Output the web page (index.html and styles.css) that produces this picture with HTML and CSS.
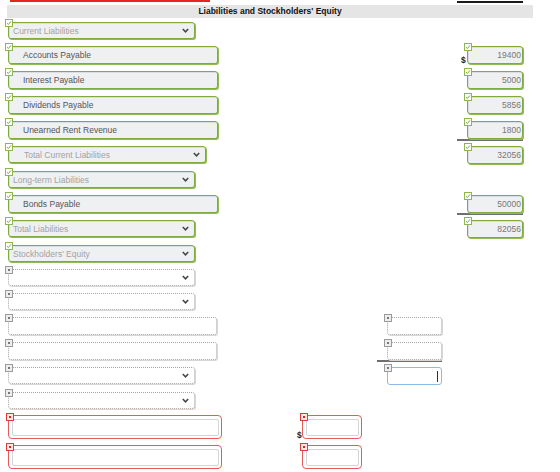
FILE: index.html
```html
<!doctype html>
<html>
<head>
  <meta charset="utf-8">
  <title>Balance Sheet</title>
  <link rel="stylesheet" href="styles.css">
</head>
<body>
  <div class="sheet">
    <div class="cutoff"><span class="cut-red"></span><span class="cut-black"></span></div>
    <div class="heading">Liabilities and Stockholders' Equity</div>

    <div class="rows">
      <div class="row">
        <div class="field ok select"><i class="badge"></i><span class="ph">Current Liabilities</span><i class="chev"></i></div>
      </div>
      <div class="row">
        <div class="field ok text"><i class="badge"></i>Accounts Payable</div>
        <div class="amt col-right"><span class="cur">$</span><div class="field ok num"><i class="badge"></i>19400</div></div>
      </div>
      <div class="row">
        <div class="field ok text"><i class="badge"></i>Interest Payable</div>
        <div class="amt col-right"><span class="cur"></span><div class="field ok num"><i class="badge"></i>5000</div></div>
      </div>
      <div class="row">
        <div class="field ok text"><i class="badge"></i>Dividends Payable</div>
        <div class="amt col-right"><span class="cur"></span><div class="field ok num"><i class="badge"></i>5856</div></div>
      </div>
      <div class="row">
        <div class="field ok text"><i class="badge"></i>Unearned Rent Revenue</div>
        <div class="amt col-right ruled"><span class="cur"></span><div class="field ok num"><i class="badge"></i>1800</div></div>
      </div>
      <div class="row">
        <div class="field ok select wide"><i class="badge"></i><span class="ph">Total Current Liabilities</span><i class="chev"></i></div>
        <div class="amt col-right"><span class="cur"></span><div class="field ok num"><i class="badge"></i>32056</div></div>
      </div>
      <div class="row">
        <div class="field ok select"><i class="badge"></i><span class="ph">Long-term Liabilities</span><i class="chev"></i></div>
      </div>
      <div class="row">
        <div class="field ok text"><i class="badge"></i>Bonds Payable</div>
        <div class="amt col-right ruled"><span class="cur"></span><div class="field ok num"><i class="badge"></i>50000</div></div>
      </div>
      <div class="row">
        <div class="field ok select"><i class="badge"></i><span class="ph">Total Liabilities</span><i class="chev"></i></div>
        <div class="amt col-right"><span class="cur"></span><div class="field ok num"><i class="badge"></i>82056</div></div>
      </div>
      <div class="row">
        <div class="field ok select"><i class="badge"></i><span class="ph">Stockholders' Equity</span><i class="chev"></i></div>
      </div>

      <div class="row">
        <div class="field blank select"><i class="badge"></i><i class="chev"></i></div>
      </div>
      <div class="row">
        <div class="field blank select"><i class="badge"></i><i class="chev"></i></div>
      </div>
      <div class="row">
        <div class="field blank text"><i class="badge"></i></div>
        <div class="amt col-mid"><span class="cur"></span><div class="field blank num"><i class="badge"></i></div></div>
      </div>
      <div class="row">
        <div class="field blank text"><i class="badge"></i></div>
        <div class="amt col-mid ruled"><span class="cur"></span><div class="field blank num"><i class="badge"></i></div></div>
      </div>
      <div class="row">
        <div class="field blank select"><i class="badge"></i><i class="chev"></i></div>
        <div class="amt col-mid"><span class="cur"></span><div class="field blank num focus"><i class="badge"></i><i class="caret"></i></div></div>
      </div>
      <div class="row">
        <div class="field blank select"><i class="badge"></i><i class="chev"></i></div>
      </div>
    </div>

    <div class="rows lower">
      <div class="row">
        <div class="field bad text"><i class="badge"></i><span class="well"></span></div>
        <div class="amt"><span class="cur">$</span><div class="field bad num"><i class="badge"></i><span class="well"></span></div></div>
      </div>
      <div class="row">
        <div class="field bad text"><i class="badge"></i><span class="well"></span></div>
        <div class="amt ruled"><span class="cur"></span><div class="field bad num"><i class="badge"></i><span class="well"></span></div></div>
      </div>
    </div>
  </div>
</body>
</html>
```

FILE: styles.css
```css
body {
  margin: 0;
  background: #fff;
  font-family: "Liberation Sans", Arial, sans-serif;
  font-size: 8.5px;
  color: #555;
}
.sheet {
  width: 526px;
  margin-left: 7px;
}

/* bottom edge of the section above */
.cutoff {
  display: flex;
  height: 5px;
}
.cut-red {
  margin-left: 3px;
  width: 200px;
  height: 2px;
  background: #e4261f;
}
.cut-black {
  margin-left: 247px;
  margin-top: 1px;
  width: 66px;
  height: 2px;
  background: #1a1a1a;
}

.heading {
  height: 13px;
  line-height: 13px;
  background: #e5e5e5;
  text-align: center;
  font-weight: bold;
  color: #111;
}

.rows {
  display: flex;
  flex-direction: column;
  gap: 7px;
  padding-top: 4px;
}
.row {
  display: grid;
  grid-template-columns: 370px 80px 76px;
  align-items: start;
}
.col-mid { grid-column: 2; }
.col-right { grid-column: 3; }

.lower {
  margin-top: 6px;
  gap: 6px;
  padding-top: 0;
}
.lower .row {
  grid-template-columns: 290px 80px;
}

/* inputs */
.field {
  position: relative;
  box-sizing: border-box;
  display: flex;
  align-items: center;
  margin-left: 1px;
  border-radius: 3px;
  white-space: nowrap;
}
.select {
  width: 187px;
  height: 17px;
  padding-left: 4px;
}
.select.wide {
  width: 198px;
  padding-left: 15px;
}
.text {
  width: 210px;
  height: 18px;
  padding-left: 14px;
}
.num {
  width: 56px;
  height: 18px;
  justify-content: flex-end;
  padding-right: 1px;
  margin-left: 0;
  color: #777;
}
.ph { color: #a2a2a2; }

.chev {
  margin-left: auto;
  margin-right: 5px;
  width: 7px;
  height: 5px;
  background: url("data:image/svg+xml,%3Csvg xmlns='http://www.w3.org/2000/svg' width='7' height='5'%3E%3Cpolyline points='0.8,1 3.5,3.8 6.2,1' fill='none' stroke='%23444' stroke-width='1.5'/%3E%3C/svg%3E") no-repeat;
}

.ok {
  background: #eff0f2;
  border: 1px solid #7dab3d;
  box-shadow: 1px 1px 0 #8fbb52, inset 1px 1px 0 #dcdde0;
}
.blank {
  background: #fff;
  border: 1px dotted #a5a5a5;
  box-shadow: 1px 1px 0 #d6d6d6;
}
.blank.text { width: 209px; }
.blank.num { width: 55px; }
.blank.focus {
  border: 1px solid #8bbbe9;
  box-shadow: none;
}
.caret {
  width: 1px;
  height: 11px;
  margin-right: 2px;
  background: #333;
}

.bad {
  height: 24px;
  padding: 3px 2px 2px 3px;
  border: 1px solid #e65a5a;
  border-radius: 4px;
  background: #fff;
}
.bad.text { width: 214px; }
.bad.num { width: 60px; }
.well {
  flex: 1;
  align-self: stretch;
  border: 1px solid #d4d4d4;
  border-radius: 2px;
}

/* status marks on the top left corner */
.badge {
  position: absolute;
  left: -4px;
  top: -4px;
  width: 8px;
  height: 8px;
  box-sizing: border-box;
}
.ok .badge {
  border: 1px solid #8cb652;
  background: #fff url("data:image/svg+xml,%3Csvg xmlns='http://www.w3.org/2000/svg' width='6' height='6'%3E%3Cpolyline points='1,3.2 2.4,4.5 5,1.4' fill='none' stroke='%237aa83a' stroke-width='1'/%3E%3C/svg%3E") no-repeat center;
}
.blank .badge {
  border: 1px solid #9a9a9a;
  background: #eee;
}
.bad .badge {
  left: -3px;
  top: -3px;
  border: 1px solid #e23a3a;
  background: #fde8e8;
}
.blank .badge::after,
.bad .badge::after {
  content: "";
  position: absolute;
  left: 2px;
  top: 2px;
  width: 2px;
  height: 2px;
  background: #777;
}
.bad .badge::after { background: #e02020; }

/* amount cells with currency sign and total rule */
.amt {
  display: flex;
  align-items: flex-end;
  justify-self: start;
}
.cur {
  width: 10px;
  padding-left: 4px;
  box-sizing: border-box;
  line-height: 8px;
  font-weight: bold;
  color: #222;
}
.lower .cur {
  width: 5px;
  padding-left: 0;
}
.ruled {
  box-shadow: 0 2px 0 #6f6f6f;
}
```
